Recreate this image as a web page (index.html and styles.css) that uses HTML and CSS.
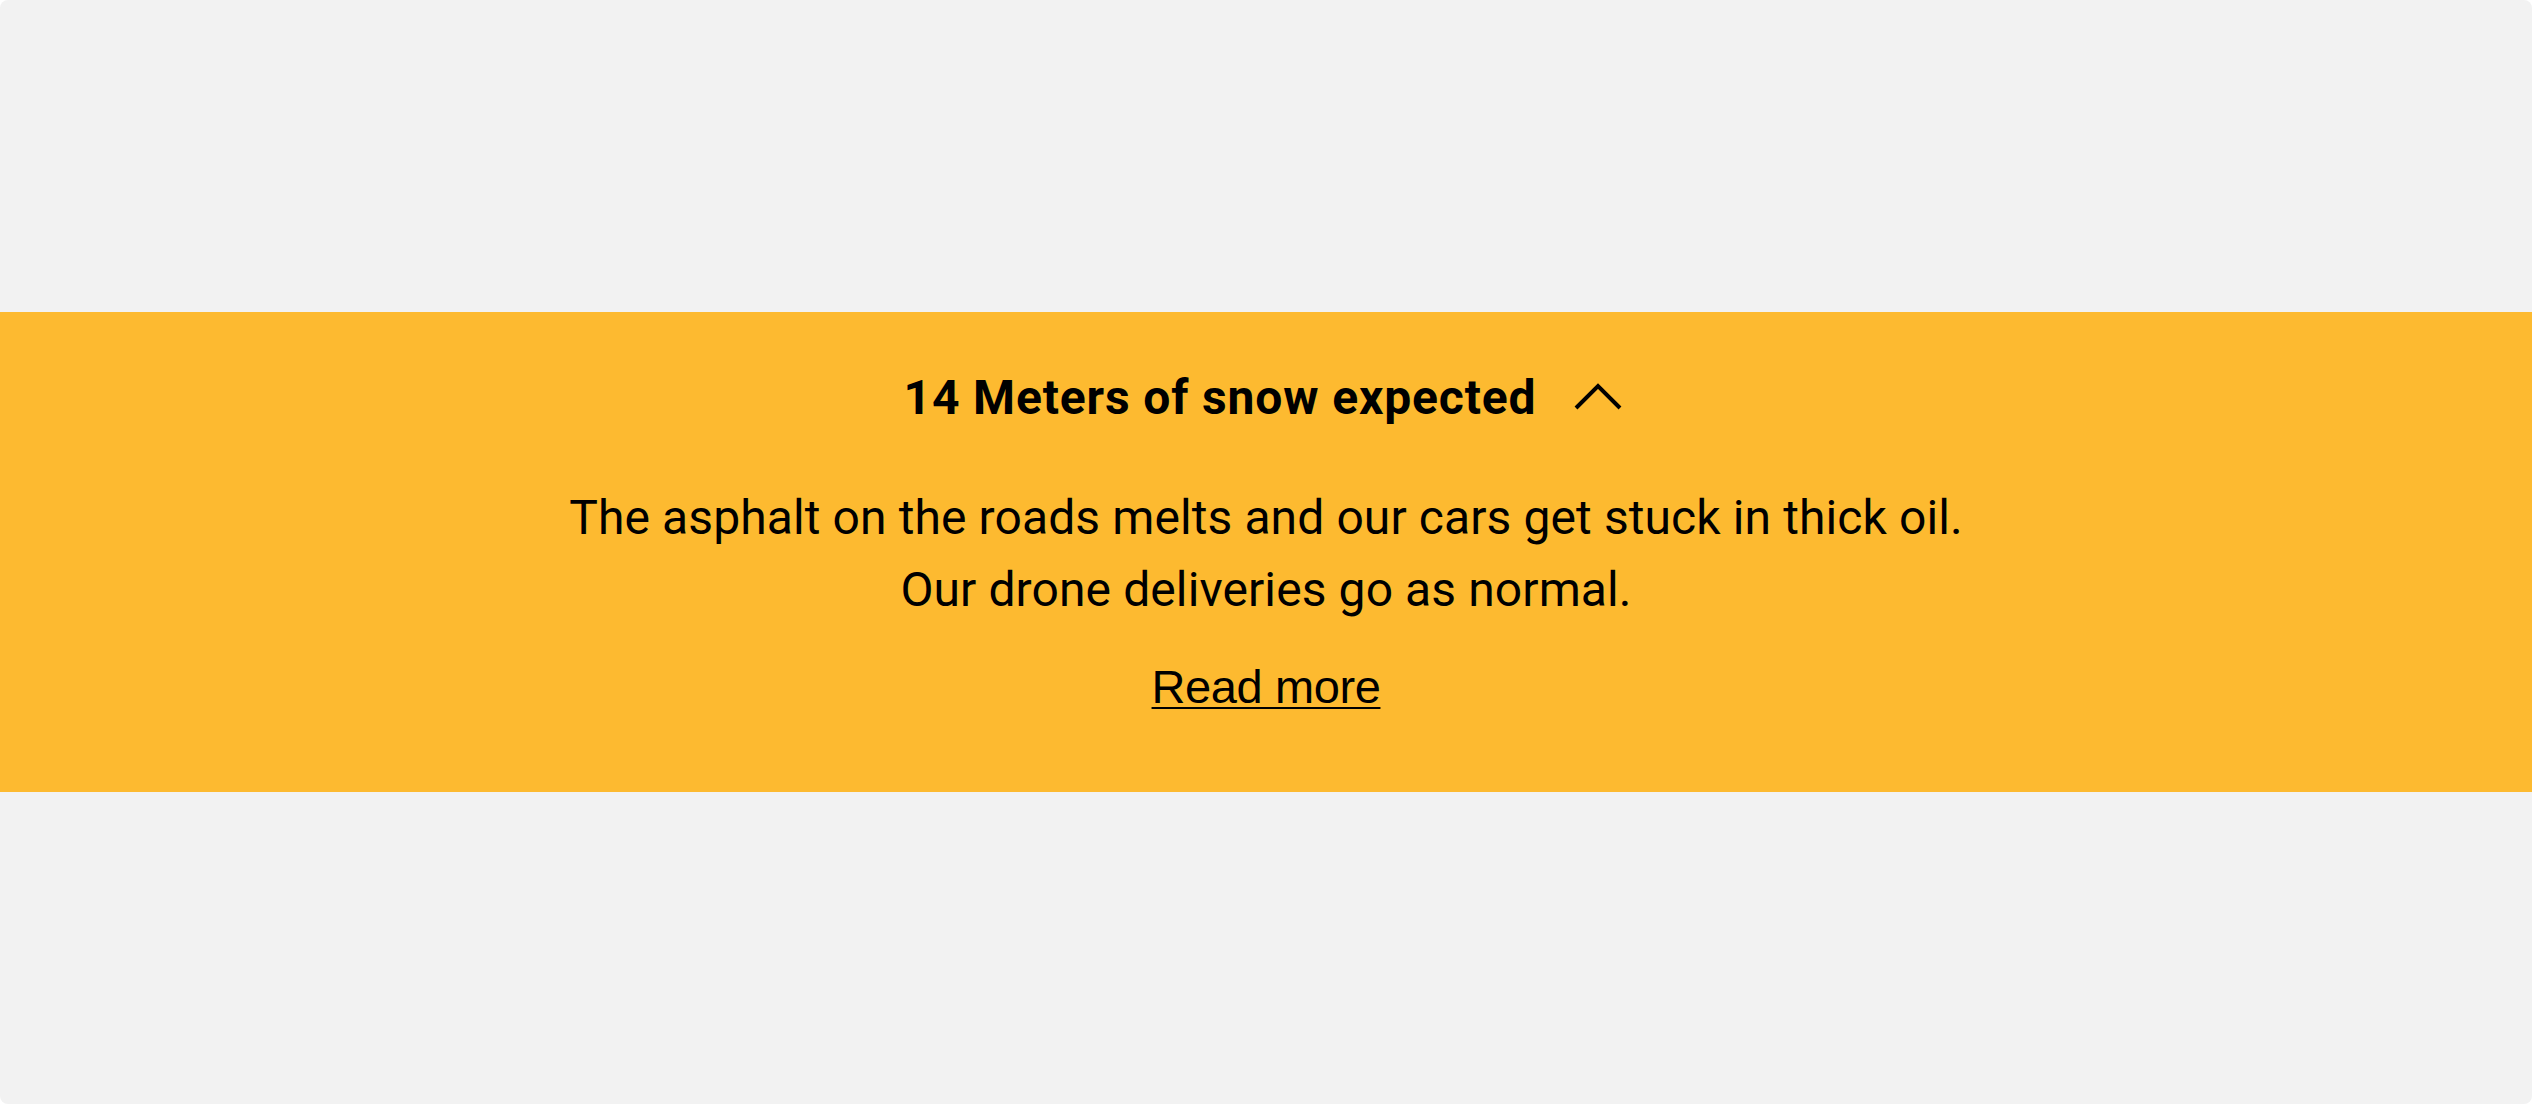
FILE: index.html
```html
<!DOCTYPE html>
<html lang="en">
<head>
<meta charset="utf-8">
<title>Alert banner</title>
<link rel="stylesheet" href="styles.css">
</head>
<body>
<div class="page">
  <section class="banner">
    <div class="banner-head">
      <h2 class="banner-title">14 Meters of snow expected</h2>
      <button class="toggle" type="button" aria-label="Collapse">
        <svg width="48" height="28" viewBox="0 0 48 28" aria-hidden="true">
          <polyline points="2,25 24,3 46,25" fill="none" stroke="#000" stroke-width="4" stroke-linecap="butt" stroke-linejoin="miter"/>
        </svg>
      </button>
    </div>
    <p class="banner-text">The asphalt on the roads melts and our cars get stuck in thick oil.<br>Our drone deliveries go as normal.</p>
    <a class="banner-link" href="#">Read more</a>
  </section>
</div>
</body>
</html>
```
FILE: styles.css
```css
html, body {
  margin: 0;
  padding: 0;
  background: #ffffff;
}

.page {
  height: 100vh;
  background: #f2f2f2;
  border-radius: 8px;
  display: flex;
  flex-direction: column;
  justify-content: center;
}

.banner {
  background: #fdba30;
  color: #000;
  text-align: center;
  padding: 58px 0 77px;
  display: flex;
  flex-direction: column;
  align-items: center;
}

.banner-head {
  display: flex;
  align-items: center;
  height: 56px;
  margin-left: -6px;
}

.banner-title {
  margin: 0;
  font-family: Roboto, "Liberation Sans", sans-serif;
  font-weight: 700;
  font-size: 48px;
  line-height: 56px;
  letter-spacing: 0.85px;
}

.toggle {
  margin: 0 0 0 38px;
  padding: 0;
  border: 0;
  background: none;
  display: flex;
  cursor: pointer;
  position: relative;
  top: -1px;
}

.banner-text {
  margin: 56px 0 0;
  font-family: Roboto, "Liberation Sans", sans-serif;
  font-weight: 400;
  font-size: 48px;
  line-height: 72px;
  letter-spacing: 0.1px;
}

.banner-link {
  margin-top: 33px;
  font-family: "Liberation Sans", Arial, sans-serif;
  font-size: 47px;
  line-height: 56px;
  letter-spacing: -0.4px;
  color: #000;
  text-decoration: underline;
  text-decoration-thickness: 2px;
  text-underline-offset: 4px;
}
```
